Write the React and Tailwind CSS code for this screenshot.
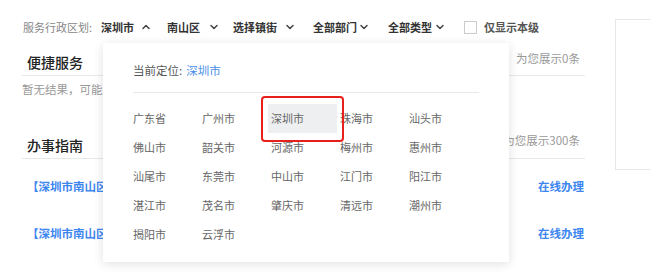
import { ChevronDown, ChevronUp } from "lucide-react";

const cities = [
  "广东省", "广州市", "深圳市", "珠海市", "汕头市",
  "佛山市", "韶关市", "河源市", "梅州市", "惠州市",
  "汕尾市", "东莞市", "中山市", "江门市", "阳江市",
  "湛江市", "茂名市", "肇庆市", "清远市", "潮州市",
  "揭阳市", "云浮市",
];

function FilterItem({ label, open, gap, className = "" }) {
  return (
    <div className={"flex items-center shrink-0 " + className}>
      <span className="font-bold text-[#333]">{label}</span>
      {open ? (
        <ChevronUp size={12} strokeWidth={3} className={gap + " shrink-0 text-[#444]"} />
      ) : (
        <ChevronDown size={12} strokeWidth={3} className={gap + " shrink-0 text-[#444]"} />
      )}
    </div>
  );
}

function GuideRow() {
  return (
    <div className="flex items-center justify-between h-[47px] pl-[5px] pr-[1px]">
      <span className="text-[11.5px] font-bold text-[#3d86f0] whitespace-nowrap">【深圳市南山区】企业投资项目备案</span>
      <span className="text-[11.5px] font-bold text-[#3d86f0]">在线办理</span>
    </div>
  );
}

export default function App() {
  return (
    <div
      className="relative w-[650px] h-[272px] bg-white overflow-hidden flex"
      style={{ fontFamily: '"Noto Sans CJK SC", "Noto Sans", sans-serif' }}
    >
      {/* main column */}
      <div className="w-[563px] ml-[22px] shrink-0">
        {/* filter bar */}
        <div className="mt-[19px] h-[16px] flex items-center text-[11px] whitespace-nowrap">
          <span className="text-[#888] ml-[1px]">服务行政区划:</span>
          <FilterItem label="深圳市" open gap="ml-[6px]" className="ml-[9px]" />
          <FilterItem label="南山区" gap="ml-[8px]" className="ml-[15px]" />
          <FilterItem label="选择镇街" gap="ml-[7px]" className="ml-[13px]" />
          <FilterItem label="全部部门" gap="ml-[1px]" className="ml-[17px]" />
          <FilterItem label="全部类型" gap="ml-[2px]" className="ml-[18px]" />
          <span className="ml-[18px] inline-block shrink-0 w-[13px] h-[13px] border border-[#ccc] bg-white" />
          <span className="ml-[7px] font-bold text-[#555]">仅显示本级</span>
        </div>

        {/* quick services */}
        <div className="mt-[15px] flex items-end justify-between border-b border-[#e8e8e8] pb-[3px] pl-[5px] pr-[5px]">
          <span className="text-[14px] font-medium text-[#222] leading-[20px]">便捷服务</span>
          <span className="text-[11.5px] text-[#999] mb-[5px]">根据您的选择，为您展示0条</span>
        </div>
        <div className="mt-[5px] text-[11.5px] text-[#999] leading-[16px] whitespace-nowrap">
          暂无结果，可能是当前区划暂无相关服务
        </div>

        {/* guides */}
        <div className="mt-[35px] flex items-end justify-between border-b border-[#e8e8e8] pb-[3px] pl-[5px] pr-[5px]">
          <span className="text-[14px] font-medium text-[#222] leading-[20px]">办事指南</span>
          <span className="text-[11.5px] text-[#999] mb-[5px]">根据您的选择，为您展示300条</span>
        </div>
        <div className="mt-[5px]">
          <GuideRow />
          <GuideRow />
        </div>
      </div>

      {/* right panel */}
      <div className="ml-[30px] mt-[19px] w-[80px] h-[151px] border border-[#e6e6e6] shrink-0" />

      {/* city dropdown */}
      <div className="absolute left-[103px] top-[43px] w-[406px] h-[219px] bg-white shadow-[0_2px_10px_rgba(0,0,0,0.12)] pl-[30px] pr-[30px]">
        <div className="mt-[20px] h-[16px] flex items-center text-[11.5px]">
          <span className="text-[#555]">当前定位:</span>
          <span className="ml-[4px] text-[#4a90e8]">深圳市</span>
        </div>
        <div className="mt-[13px] border-t border-[#e8e8e8]" />
        <div className="mt-[11px] -ml-[3px] grid grid-cols-[repeat(5,69px)] text-[11px] text-[#666]">
          {cities.map((c) => (
            <div
              key={c}
              className={
                "h-[29px] px-[3px] flex items-center " +
                (c === "深圳市" ? "bg-[#eeeff1]" : "")
              }
            >
              {c}
            </div>
          ))}
        </div>
      </div>

      {/* annotation box */}
      <div className="absolute left-[261px] top-[96px] w-[83px] h-[46px] border-2 border-[#e8201c] rounded-[4px]" />
    </div>
  );
}
